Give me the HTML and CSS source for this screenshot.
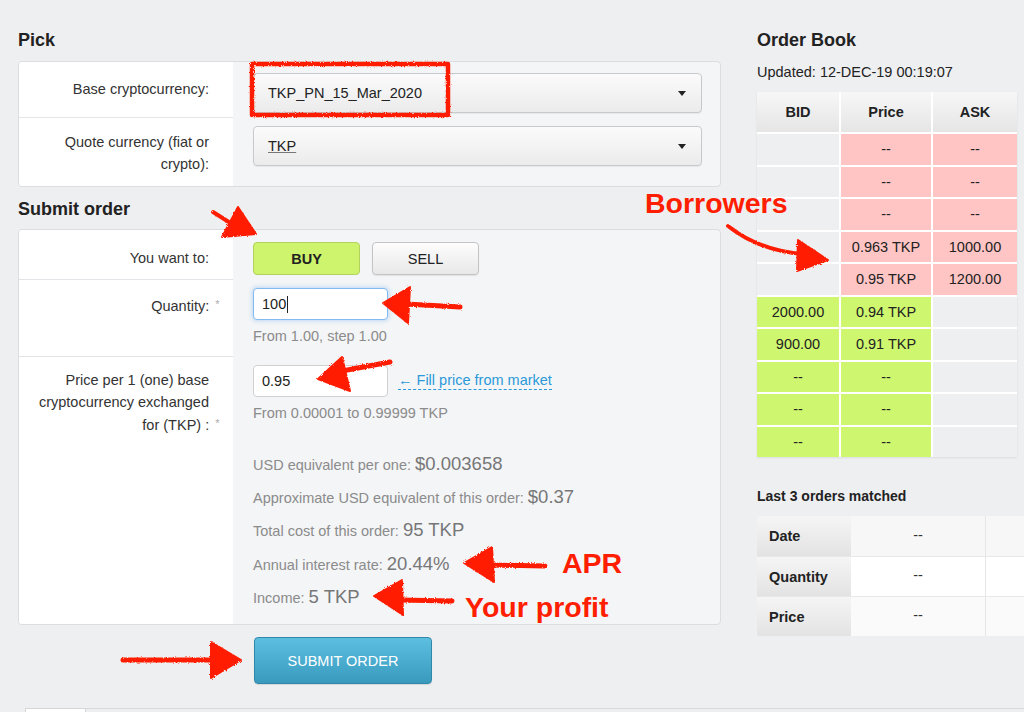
FILE: index.html
```html
<!DOCTYPE html>
<html lang="en">
<head>
<meta charset="utf-8">
<title>Exchange order</title>
<link rel="stylesheet" href="styles.css">
</head>
<body>
<div class="page">
  <div class="main">
    <h2 class="title">Pick</h2>
    <div class="panel pick">
      <div class="label sep l-base">Base cryptocurrency:</div>
      <div class="field f-base"><div class="select"><span>TKP_PN_15_Mar_2020</span><i class="caret"></i></div></div>
      <div class="label l-quote">Quote currency (fiat or crypto):</div>
      <div class="field f-quote"><div class="select"><span class="abbr">TKP</span><i class="caret"></i></div></div>
    </div>

    <h2 class="title title-submit">Submit order</h2>
    <div class="panel order">
      <div class="label sep l-want">You want to:</div>
      <div class="field f-want"><button class="btn buy">BUY</button><button class="btn sell">SELL</button></div>

      <div class="label sep l-qty">Quantity:<span class="req">*</span></div>
      <div class="field f-qty">
        <div class="input focus">100<span class="cursor"></span></div>
        <div class="hint">From 1.00, step 1.00</div>
      </div>

      <div class="label l-price">Price per 1 (one) base cryptocurrency exchanged for (TKP) :<span class="req">*</span></div>
      <div class="field f-price">
        <div class="inline"><div class="input">0.95</div><span class="fill">← Fill price from market</span></div>
        <div class="hint">From 0.00001 to 0.99999 TKP</div>
        <div class="stats">
          <div class="stat">USD equivalent per one: <b>$0.003658</b></div>
          <div class="stat">Approximate USD equivalent of this order: <b>$0.37</b></div>
          <div class="stat">Total cost of this order: <b>95 TKP</b></div>
          <div class="stat">Annual interest rate: <b>20.44%</b></div>
          <div class="stat">Income: <b>5 TKP</b></div>
        </div>
      </div>
    </div>

    <button class="submit">SUBMIT ORDER</button>
  </div>

  <div class="side">
    <h2 class="title">Order Book</h2>
    <div class="updated">Updated: 12-DEC-19 00:19:07</div>
    <div class="book">
      <div class="bh">BID</div><div class="bh">Price</div><div class="bh">ASK</div>
      <div class="c"></div><div class="c r">--</div><div class="c r">--</div>
      <div class="c"></div><div class="c r">--</div><div class="c r">--</div>
      <div class="c"></div><div class="c r">--</div><div class="c r">--</div>
      <div class="c"></div><div class="c r">0.963 TKP</div><div class="c r">1000.00</div>
      <div class="c"></div><div class="c r">0.95 TKP</div><div class="c r">1200.00</div>
      <div class="c g">2000.00</div><div class="c g">0.94 TKP</div><div class="c"></div>
      <div class="c g">900.00</div><div class="c g">0.91 TKP</div><div class="c"></div>
      <div class="c g">--</div><div class="c g">--</div><div class="c"></div>
      <div class="c g">--</div><div class="c g">--</div><div class="c"></div>
      <div class="c g">--</div><div class="c g">--</div><div class="c"></div>
    </div>

    <div class="last-title">Last 3 orders matched</div>
    <div class="matched">
      <div class="ml">Date</div><div class="mv m1">--</div><div class="mv m1 mx"></div>
      <div class="ml">Quantity</div><div class="mv m2">--</div><div class="mv m2 mx"></div>
      <div class="ml">Price</div><div class="mv m3">--</div><div class="mv m3 mx"></div>
    </div>
  </div>
</div>

<div class="footer"><div class="tab"></div></div>

<svg class="marks" width="1024" height="712" viewBox="0 0 1024 712" aria-hidden="true">
  <defs>
    <filter id="rough" x="-5%" y="-5%" width="110%" height="110%">
      <feTurbulence type="fractalNoise" baseFrequency="0.9" numOctaves="2" result="n"/>
      <feDisplacementMap in="SourceGraphic" in2="n" scale="3"/>
    </filter>
  </defs>
  <g fill="#ff1e00" stroke="#ff1e00" stroke-linecap="round" stroke-linejoin="round" filter="url(#rough)">
    <rect x="252" y="64" width="196" height="51" fill="none" stroke-width="4.5"/>
    <path d="M213 212 L232 224" fill="none" stroke-width="4"/>
    <polygon points="238,207 256,234 222,237" stroke-width="2"/>
    <path d="M406 304 L460 307" fill="none" stroke-width="5"/>
    <polygon points="383,303 410,287 408,323" stroke-width="2"/>
    <path d="M342 371 L390 362" fill="none" stroke-width="5"/>
    <polygon points="318,379 342,357 350,391" stroke-width="2"/>
    <path d="M728 226 Q 758 250 802 254" fill="none" stroke-width="4"/>
    <polygon points="798,240 828,260 797,271" stroke-width="2"/>
    <path d="M490 565 L545 566" fill="none" stroke-width="5"/>
    <polygon points="464,563 492,547 494,582" stroke-width="2"/>
    <path d="M400 600 L452 601" fill="none" stroke-width="5"/>
    <polygon points="374,596 402,580 403,615" stroke-width="2"/>
    <path d="M123 660 L215 660" fill="none" stroke-width="5"/>
    <polygon points="211,642 241,660 211,678" stroke-width="2"/>
  </g>
  <g class="note">
    <text x="645" y="213">Borrowers</text>
    <text x="562" y="573">APR</text>
    <text x="465" y="617">Your profit</text>
  </g>
</svg>
</body>
</html>
```

FILE: styles.css
```css
* { box-sizing: border-box; }
html, body { margin: 0; }
body {
  width: 1024px;
  height: 712px;
  overflow: hidden;
  position: relative;
  background: #eeeff1;
  font-family: "Liberation Sans", Arial, sans-serif;
  color: #222;
}
.page { display: flex; padding: 30px 0 0 18px; }
.main { width: 703px; flex: none; }
.side { width: 267px; margin-left: 36px; flex: none; }

.title { margin: 0; font-size: 18px; line-height: 20px; font-weight: bold; color: #222; }
.title-submit { margin-top: 12px; }

.panel {
  display: grid;
  grid-template-columns: 214px 1fr;
  background: #f4f5f7;
  border: 1px solid #dcdde1;
  border-radius: 4px;
  overflow: hidden;
}
.pick { margin-top: 11px; grid-template-rows: 56px 68px; }
.order { margin-top: 10px; grid-template-rows: 50px 77px 267px; }

.label {
  background: #fff;
  text-align: right;
  padding: 0 24px 0 12px;
  font-size: 14.5px;
  line-height: 21.5px;
  color: #333;
}
.label.sep { border-bottom: 1px solid #e3e4e7; }
.l-base { padding-top: 17px; }
.l-quote { padding-top: 14px; }
.l-want { padding-top: 18px; }
.l-qty { padding-top: 14px; }
.l-price { padding-top: 13px; }
.req { color: #aaa; font-size: 11px; margin-left: 6px; margin-right: -10.5px; vertical-align: 3px; }

.field { padding: 0 18px 0 20px; }
.f-base { padding-top: 11px; }
.f-quote { padding-top: 8px; }
.f-want { padding-top: 12px; display: flex; }
.f-qty, .f-price { padding-top: 8px; }

.select {
  height: 40px;
  border: 1px solid #c8c9cc;
  border-radius: 4px;
  background: linear-gradient(#fbfbfb, #ebebeb);
  box-shadow: 0 1px 1px rgba(0, 0, 0, 0.06);
  display: flex;
  align-items: center;
  justify-content: space-between;
  padding: 0 15px 0 14px;
  font-size: 14.5px;
  color: #222;
}
.abbr { text-decoration: underline; text-decoration-color: #777; }
.caret {
  width: 0; height: 0;
  border-left: 4.5px solid transparent;
  border-right: 4.5px solid transparent;
  border-top: 5px solid #222;
}

.btn {
  width: 107px;
  height: 33px;
  border-radius: 4px;
  font-family: "Liberation Sans", Arial, sans-serif;
  font-size: 14.5px;
  color: #222;
  padding: 0;
}
.buy { background: #cdf46c; border: 1px solid #b2d25c; font-weight: bold; }
.sell {
  margin-left: 12px;
  background: linear-gradient(#fdfdfd, #e8e8e8);
  border: 1px solid #c4c4c4;
  box-shadow: 0 1px 1px rgba(0, 0, 0, 0.08);
}

.input {
  width: 135px;
  height: 32px;
  border: 1px solid #cfd0d2;
  border-radius: 4px;
  background: #fff;
  display: flex;
  align-items: center;
  padding: 0 8px;
  font-size: 14.5px;
  color: #222;
}
.input.focus { border-color: #83bbee; box-shadow: 0 0 4px 1px rgba(120, 180, 240, 0.45); }
.cursor { display: inline-block; width: 1px; height: 17px; background: #222; margin-left: 1px; }

.inline { display: flex; align-items: center; }
.fill {
  margin-left: 10px;
  color: #2b9ad9;
  font-size: 14.5px;
  line-height: 17px;
  border-bottom: 1px dashed #2b9ad9;
}
.hint { margin-top: 6px; line-height: 20px; font-size: 14.5px; color: #8b8b8b; }

.stats { margin-top: 26px; }
.stat { height: 33.2px; line-height: 33px; font-size: 14.5px; color: #8b8b8b; }
.stat b { font-weight: normal; font-size: 18.5px; line-height: 1; color: #777; }

.submit {
  display: block;
  margin: 12px 0 0 236px;
  width: 178px;
  height: 47px;
  border: 1px solid #2f88a9;
  border-radius: 4px;
  background: linear-gradient(#5cbfe0, #399abe);
  color: #fff;
  font-family: "Liberation Sans", Arial, sans-serif;
  font-size: 14.5px;
  padding: 0;
  box-shadow: 0 1px 1px rgba(0, 0, 0, 0.1);
}

.footer { margin: 24px 0 0 25px; height: 10px; border-top: 1px solid #d8d9db; }
.tab {
  width: 61px; height: 10px; margin-top: -1px;
  background: #fff;
  border: 1px solid #d4d5d7;
  border-bottom: none;
}

.updated { margin-top: 12px; font-size: 14.5px; line-height: 20px; color: #222; }
.book {
  margin-top: 10px;
  display: grid;
  grid-template-columns: 82px 90px 84px;
  grid-template-rows: 40px repeat(10, 30.5px);
  gap: 2px;
  width: max-content;
  background: #fff;
  box-shadow: 0 1px 2px rgba(0, 0, 0, 0.08);
}
.bh {
  display: flex; align-items: center; justify-content: center;
  background: linear-gradient(#f7f7f7, #e5e5e6);
  font-weight: bold;
  font-size: 14.5px;
  color: #222;
}
.c {
  display: flex; align-items: center; justify-content: center;
  background: #eeeff1;
  font-size: 14.5px;
  color: #222;
}
.c.r { background: #ffc5c5; }
.c.g { background: #cff66f; }

.last-title { margin-top: 29px; font-size: 14px; line-height: 20px; font-weight: bold; color: #222; }
.matched {
  margin-top: 10px;
  display: grid;
  grid-template-columns: 94px 134px 80px;
  grid-template-rows: 40px 39px 39px;
  row-gap: 1px;
  width: max-content;
  background: #e7e8ea;
  border-radius: 3px 0 0 3px;
  overflow: hidden;
}
.ml {
  display: flex; align-items: center;
  padding-left: 12px;
  background: linear-gradient(#f5f5f5, #e3e3e4);
  font-weight: bold;
  font-size: 14.5px;
  color: #222;
}
.mv { display: flex; align-items: center; justify-content: center; padding-bottom: 3px; font-size: 14.5px; color: #333; }
.m1 { background: #f7f7f8; }
.m2 { background: #fff; }
.m3 { background: #fafafa; }
.mx { border-left: 1px solid #e6e6e8; }

.marks { position: absolute; left: 0; top: 0; pointer-events: none; }
.note text { font-family: "Liberation Sans", Arial, sans-serif; font-weight: bold; font-size: 28.5px; fill: #ff1e00; }
```
